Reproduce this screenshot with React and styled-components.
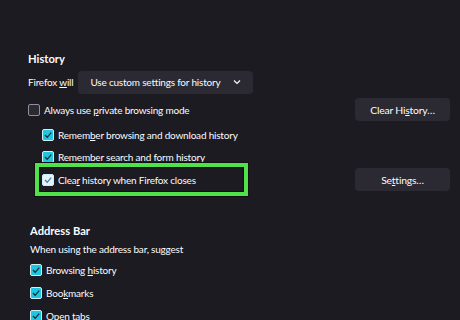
import React from 'react'
import styled, { createGlobalStyle } from 'styled-components'

const GlobalStyle = createGlobalStyle`
  body {
    margin: 0;
    background: #1c1b22;
    color: #fbfbfe;
    font-family: Lato, 'Open Sans', sans-serif;
    font-size: 10px;
    letter-spacing: -0.2px;
  }
`

const Page = styled.div`
  width: 460px;
  height: 320px;
  overflow: hidden;
  box-sizing: border-box;
  padding: 50px 10px 0 28px;
`

const Section = styled.section`
  display: flex;
  flex-direction: column;
  padding-left: ${p => p.$shift || 0}px;
  margin-top: ${p => p.$top || 0}px;
`

const Heading = styled.h2`
  margin: 0;
  height: 18px;
  line-height: 18px;
  font-size: 11.2px;
  font-weight: 700;
  letter-spacing: 0;
`

const Text = styled.div`
  height: 18px;
  line-height: 18px;
`

const Row = styled.div`
  display: flex;
  align-items: center;
  justify-content: space-between;
  height: ${p => p.$h || 23}px;
  padding-left: ${p => p.$indent || 0}px;
`

const Inline = styled.div`
  display: flex;
  align-items: center;
  gap: 5px;
`

const Select = styled.div`
  display: flex;
  align-items: center;
  gap: 13px;
  height: 23px;
  padding: 0 12px;
  border-radius: 4px;
  background: #2b2a33;
`

const Button = styled.div`
  display: flex;
  align-items: center;
  justify-content: center;
  width: 95px;
  height: 23px;
  border-radius: 4px;
  background: #2b2a33;
  font-size: 10.4px;
`

const Label = styled.label`
  display: flex;
  align-items: center;
  gap: 4px;
  height: 23px;
  ${p =>
    p.$highlight &&
    `
    box-sizing: border-box;
    width: 203px;
    margin-left: -2px;
    padding-left: 2px;
    box-shadow: 0 0 0 1px #101010, 0 0 0 5px #4fe24b, 0 0 0 6px #101010;
  `}
`

const Box = styled.span`
  display: inline-flex;
  align-items: center;
  justify-content: center;
  box-sizing: border-box;
  width: 12px;
  height: 12px;
  border-radius: 2px;
  border: 1px solid ${p => (p.$checked ? '#cfeef6' : '#8f8f9d')};
  background: ${p => (p.$checked ? (p.$focus ? '#e6f3f8' : '#1fc6e2') : '#2b2a33')};

  svg {
    width: 10px;
    height: 10px;
  }
`

const Check = ({ checked, focus }) => (
  <Box $checked={checked} $focus={focus}>
    {checked && (
      <svg viewBox="0 0 10 10" fill="none" stroke={focus ? '#3a86a8' : '#1c2a33'} strokeWidth="1.3">
        <polyline points="2 5 4.2 7.3 8.2 2.6" />
      </svg>
    )}
  </Box>
)

const Chevron = () => (
  <svg width="8" height="6" viewBox="0 0 8 6" fill="none" stroke="#fbfbfe" strokeWidth="1.2">
    <polyline points="1 1.5 4 4.5 7 1.5" />
  </svg>
)

export default function App() {
  return (
    <>
      <GlobalStyle />
      <Page>
        <Section>
          <Heading>History</Heading>
          <Row $h={28}>
            <Inline>
              <span>Firefox <u>w</u>ill</span>
              <Select>
                <span>Use custom settings for history</span>
                <Chevron />
              </Select>
            </Inline>
          </Row>
          <Row $h={27}>
            <Label>
              <Check />
              <span>Always use <u>p</u>rivate browsing mode</span>
            </Label>
            <Button>Clear Hi<u>s</u>tory…</Button>
          </Row>
          <Row $indent={14}>
            <Label>
              <Check checked />
              <span>Remem<u>b</u>er browsing and download history</span>
            </Label>
          </Row>
          <Row $indent={14} $h={22}>
            <Label>
              <Check checked />
              <span>Remember search and <u>f</u>orm history</span>
            </Label>
          </Row>
          <Row $indent={14}>
            <Label $highlight>
              <Check checked focus />
              <span>Clea<u>r</u> history when Firefox closes</span>
            </Label>
            <Button>Se<u>t</u>tings…</Button>
          </Row>
        </Section>
        <Section $top={31} $shift={2}>
          <Heading>Address Bar</Heading>
          <Text>When using the address bar, suggest</Text>
          <Row>
            <Label>
              <Check checked />
              <span>Browsing <u>h</u>istory</span>
            </Label>
          </Row>
          <Row>
            <Label>
              <Check checked />
              <span>Boo<u>k</u>marks</span>
            </Label>
          </Row>
          <Row>
            <Label>
              <Check checked />
              <span>O<u>p</u>en tabs</span>
            </Label>
          </Row>
        </Section>
      </Page>
    </>
  )
}
